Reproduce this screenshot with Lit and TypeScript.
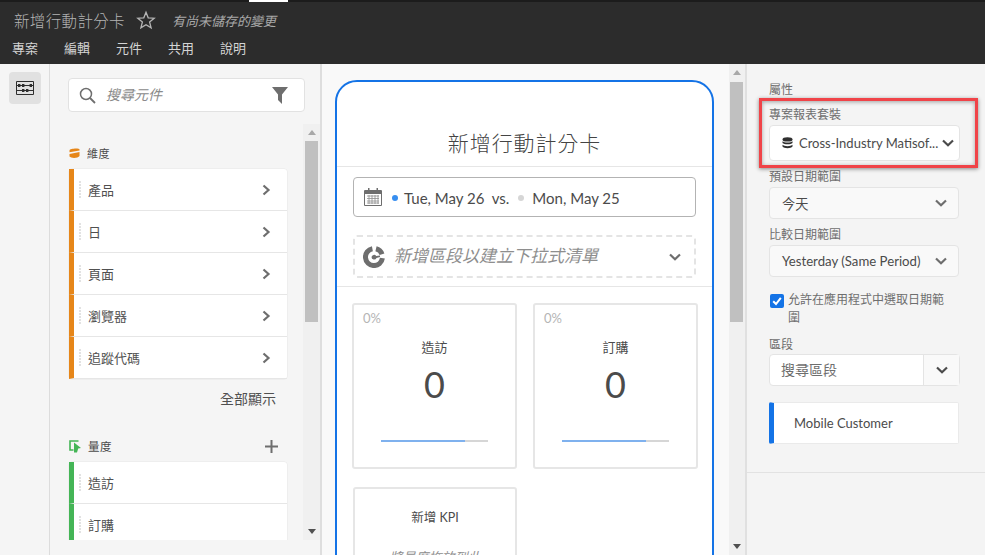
import { LitElement, html, css } from "lit";
import { customElement } from "lit/decorators.js";

const chevronRight = html`<svg class="chev-r" width="10" height="14" viewBox="0 0 10 14">
  <path d="M2.5 2.5 7.5 7 2.5 11.5" fill="none" stroke="#6e6e6e" stroke-width="2.2" />
</svg>`;

const chevronDown = html`<svg width="14" height="10" viewBox="0 0 14 10">
  <path d="M2 2.5 7 7.2 12 2.5" fill="none" stroke="#6e6e6e" stroke-width="2.2" />
</svg>`;

const darkChevron = html`<svg width="14" height="10" viewBox="0 0 14 10">
  <path d="M2 2.5 7 7.2 12 2.5" fill="none" stroke="#4b4b4b" stroke-width="2.2" />
</svg>`;

const dimensions = ["產品", "日", "頁面", "瀏覽器", "追蹤代碼"];
const metrics = ["造訪", "訂購"];

@customElement("app-root")
export class AppRoot extends LitElement {
  static styles = css`
    :host {
      display: block;
      width: 985px;
      height: 555px;
      overflow: hidden;
      position: relative;
      font-family: "Lato", "Noto Sans CJK TC", sans-serif;
      color: #4b4b4b;
      background: #f5f5f5;
    }
    .top {
      height: 64px;
      background: #2c2c2c;
      color: #cfcfcf;
      border-top: 2px solid #1c1c1c;
      box-sizing: border-box;
      position: relative;
    }
    .tab-mark {
      position: absolute;
      left: 249px;
      top: -2px;
      width: 39px;
      height: 2px;
      background: #fff;
    }
    .title-row {
      display: flex;
      align-items: center;
      height: 36px;
      padding-left: 14px;
    }
    .title {
      font-size: 15.5px;
      font-weight: 300;
      color: #b4b4b4;
      letter-spacing: 0.35px;
    }
    .star {
      margin-left: 11px;
    }
    .unsaved {
      margin-left: 16px;
      font-size: 13px;
      font-style: italic;
      color: #a8a8a8;
    }
    .menu {
      display: flex;
      gap: 26px;
      padding-left: 12px;
      font-size: 13px;
      color: #d4d4d4;
      line-height: 20px;
    }
    .body {
      display: flex;
      height: 491px;
    }
    .rail {
      flex: none;
      border-right: 1px solid #dcdcdc;
      padding: 8px 0 0 9px;
      width: 40px;
    }
    .rail-btn {
      width: 32px;
      height: 32px;
      background: #e1e1e1;
      border-radius: 4px;
      display: flex;
      align-items: center;
      justify-content: center;
    }
    .panel {
      width: 270px;
      flex: none;
      display: flex;
      flex-direction: column;
      border-right: 2px solid #dedede;
    }
    .search {
      margin: 14px 15px 0 18px;
      height: 34px;
      box-sizing: border-box;
      background: #fff;
      border: 1px solid #e2e2e2;
      border-radius: 4px;
      display: flex;
      align-items: center;
      padding: 0 16px 0 10px;
    }
    .search span {
      margin-left: 10px;
      flex: 1;
      font-size: 14px;
      line-height: 18px;
      margin-top: -1px;
      font-style: italic;
      color: #8a8a8a;
    }
    .scroller {
      display: flex;
      height: 416px;
      margin-top: 12px;
    }
    .list {
      flex: 1;
      overflow: hidden;
      padding: 0 16px 0 19px;
      min-width: 0;
    }
    .section {
      display: flex;
      align-items: center;
      font-size: 11px;
      color: #4b4b4b;
      gap: 7px;
      letter-spacing: 0.4px;
    }
    .section.dim {
      margin-top: 21px;
      height: 16px;
    }
    .section.met {
      margin-top: 30px;
      height: 16px;
      font-size: 11.5px;
    }
    .section .plus {
      margin-left: auto;
      margin-right: 9px;
    }
    .cards {
      margin-top: 8px;
      border-radius: 3px;
      background: #fff;
      box-shadow: 0 0 0 0.5px #e8e8e8;
    }
    .row {
      height: 42px;
      box-sizing: border-box;
      display: flex;
      align-items: center;
      border-left: 5px solid #e68619;
      border-bottom: 1px solid #e6e6e6;
      font-size: 13px;
      color: #505050;
      padding-right: 16px;
    }
    .row.green {
      border-left-color: #44b556;
    }
    .grip {
      width: 2px;
      height: 18px;
      margin: 0 7px 0 5px;
      background: repeating-linear-gradient(#e2e2e2 0 2px, transparent 2px 3px);
    }
    .row .label {
      flex: 1;
    }
    .show-all {
      text-align: right;
      font-size: 14px;
      line-height: 18px;
      padding: 11px 11px 0 0;
      color: #505050;
    }
    .scrollbar {
      flex: none;
      width: 17px;
      background: #f0f0f0;
      display: flex;
      flex-direction: column;
      align-items: center;
    }
    .scrollbar.narrow {
      width: 14px;
      height: 100%;
      padding-left: 1px;
      box-sizing: border-box;
    }
    .arrow {
      height: 17px;
      display: flex;
      align-items: center;
      justify-content: center;
      flex: none;
    }
    .thumb {
      flex: none;
      width: 13px;
      background: #c0c0c0;
    }
    .gap {
      flex: 1;
    }
    .center {
      flex: none;
      width: 407px;
      background: #f9f9f9;
      padding: 16px 0 0 13px;
      box-sizing: border-box;
      overflow: hidden;
    }
    .phone {
      width: 379px;
      height: 520px;
      box-sizing: border-box;
      background: #fff;
      border: 2px solid #1473e6;
      border-radius: 22px;
    }
    .phone h1 {
      margin: 0;
      height: 85px;
      box-sizing: border-box;
      padding-top: 46px;
      font-size: 21px;
      font-weight: 300;
      line-height: 30px;
      text-align: center;
      letter-spacing: 0.9px;
      color: #444;
      border-bottom: 1px solid #e6e6e6;
    }
    .date {
      margin: 10px 16px 0 16px;
      height: 40px;
      box-sizing: border-box;
      border: 1px solid #b3b3b3;
      border-radius: 4px;
      display: flex;
      align-items: center;
      padding: 2px 0 0 10px;
      font-size: 15px;
      color: #4b4b4b;
    }
    .date .cal {
      margin: -2px 10px 0 0;
    }
    .dot {
      width: 6px;
      height: 6px;
      border-radius: 50%;
      margin: 0 6px 0 0;
    }
    .seg {
      margin: 18px 16px 0 16px;
      height: 43px;
      box-sizing: border-box;
      border: 2px dashed #e4e4e4;
      border-radius: 4px;
      display: flex;
      align-items: center;
      padding: 0 12px 0 8px;
      font-size: 17px;
      font-style: italic;
      color: #8e8e8e;
    }
    .seg span {
      flex: 1;
      margin-left: 9px;
      line-height: 22px;
      margin-top: -2px;
    }
    .divider {
      margin-top: 8px;
      border-top: 1px solid #e6e6e6;
    }
    .kpis {
      display: grid;
      grid-template-columns: 165px 165px;
      column-gap: 16px;
      row-gap: 18px;
      padding: 16px 0 0 15px;
    }
    .kpi {
      height: 166px;
      box-sizing: border-box;
      border: 2px solid #e6e6e6;
      border-radius: 3px;
      background: #fff;
      display: flex;
      flex-direction: column;
      align-items: center;
    }
    .pct {
      align-self: flex-start;
      font-size: 13px;
      line-height: 14px;
      color: #b5b5b5;
      margin: 6px 0 0 9px;
    }
    .kpi .name {
      margin-top: 13px;
      font-size: 13px;
      line-height: 18px;
      color: #4b4b4b;
    }
    .kpi .val {
      margin-top: 6px;
      font-size: 36px;
      line-height: 44px;
      color: #4b4b4b;
    }
    .bar {
      margin-top: 34px;
      width: 107px;
      height: 2px;
      background: #d6d6d6;
    }
    .bar i {
      display: block;
      height: 100%;
      background: #7fb1ee;
    }
    .kpi.add {
      margin-left: 1px;
    }
    .kpi.add .name {
      margin-top: 20px;
      font-size: 12.5px;
    }
    .hint {
      margin-top: 20px;
      font-size: 13px;
      font-style: italic;
      color: #8e8e8e;
    }
    .main-scroll {
      height: 491px;
      border-right: 2px solid #e0e0e0;
      width: 16px;
      flex: none;
      background: #f0f0f0;
    }
    .props {
      flex: 1;
      padding: 18px 26px 0 22px;
      min-width: 0;
      background: #f4f4f4;
    }
    .props .lbl {
      font-size: 12px;
      line-height: 16px;
      color: #6e6e6e;
    }
    .suite {
      margin-top: 9px;
    }
    .select {
      height: 32px;
      box-sizing: border-box;
      border: 1px solid #e4e4e4;
      border-radius: 4px;
      background: #f9f9f9;
      display: flex;
      align-items: center;
      padding: 0 10px 0 12px;
      font-size: 13.2px;
      color: #4b4b4b;
      margin-top: 2px;
    }
    .select.white {
      height: 36px;
      background: #fff;
      width: 191px;
      padding-right: 4px;
      font-size: 13px;
    }
    .select .txt {
      flex: 1;
      white-space: nowrap;
    }
    .select.white .txt {
      margin-left: 6px;
    }
    .field {
      margin-top: 8px;
    }
    .check {
      display: flex;
      gap: 4px;
      margin-top: 14px;
      width: 176px;
      font-size: 12px;
      line-height: 18px;
      color: #6e6e6e;
      margin-left: 1px;
    }
    .box {
      flex: none;
      width: 14px;
      height: 14px;
      background: #1473e6;
      border-radius: 2px;
      margin-top: 3px;
    }
    .check + .field {
      margin-top: 10px;
    }
    .combo {
      display: flex;
      width: 191px;
      height: 32px;
      box-sizing: border-box;
      border: 1px solid #e4e4e4;
      border-radius: 4px;
      background: #fff;
      margin-top: 1px;
      font-size: 14px;
      color: #6e6e6e;
      align-items: center;
    }
    .combo .txt {
      flex: 1;
      padding: 0 0 3px 11px;
    }
    .combo .btn {
      width: 36px;
      height: 100%;
      border-left: 1px solid #e4e4e4;
      background: #f9f9f9;
      display: flex;
      align-items: center;
      justify-content: center;
      box-sizing: border-box;
    }
    .mobile {
      margin-top: 16px;
      width: 190px;
      height: 42px;
      box-sizing: border-box;
      background: #fff;
      border: 1px solid #eaeaea;
      border-left: 5px solid #1473e6;
      border-radius: 2px;
      display: flex;
      align-items: center;
      padding-left: 20px;
      font-size: 13px;
      color: #4b4b4b;
    }
    .rule {
      margin: 28px -26px 0 -22px;
      border-top: 1px solid #e2e2e2;
    }
    .callout {
      position: absolute;
      left: 759px;
      top: 98px;
      width: 219px;
      height: 70px;
      box-sizing: border-box;
      border: 3px solid #f04348;
      box-shadow: 0 1px 4px rgba(0, 0, 0, 0.45), inset 0 1px 4px rgba(0, 0, 0, 0.35);
      pointer-events: none;
    }
  `;

  private upArrow() {
    return html`<div class="arrow">
      <svg width="8" height="5" viewBox="0 0 8 5"><path d="M0 5 4 0 8 5Z" fill="#a8a8a8" /></svg>
    </div>`;
  }

  private downArrow() {
    return html`<div class="arrow">
      <svg width="8" height="5" viewBox="0 0 8 5"><path d="M0 0 4 5 8 0Z" fill="#505050" /></svg>
    </div>`;
  }

  private row(label: string, green: boolean) {
    return html`<div class="row ${green ? "green" : ""}">
      <div class="grip"></div>
      <div class="label">${label}</div>
      ${green ? "" : chevronRight}
    </div>`;
  }

  private kpi(name: string) {
    return html`<div class="kpi">
      <div class="pct">0%</div>
      <div class="name">${name}</div>
      <div class="val">0</div>
      <div class="bar"><i style="width: 78.5%"></i></div>
    </div>`;
  }

  render() {
    return html`
      <div class="top">
        <div class="tab-mark"></div>
        <div class="title-row">
          <div class="title">新增行動計分卡</div>
          <svg class="star" width="20" height="20" viewBox="0 0 20 20">
            <path d="M10 2.2 12.2 7.8 18.2 8.2 13.6 12 15.1 17.9 10 14.7 4.9 17.9 6.4 12 1.8 8.2 7.8 7.8Z" fill="none" stroke="#b5b5b5" stroke-width="1.3" />
          </svg>
          <div class="unsaved">有尚未儲存的變更</div>
        </div>
        <div class="menu">
          <span>專案</span><span>編輯</span><span>元件</span><span>共用</span><span>說明</span>
        </div>
      </div>
      <div class="body">
        <div class="rail">
          <div class="rail-btn">
            <svg width="18" height="14" viewBox="0 0 18 14">
              <path d="M.5.5h17v13H.5z" fill="none" stroke="#2f2f2f" />
              <path d="M1 4.5h16M1 9.5h16" stroke="#2f2f2f" />
              <path d="M2 3h2.4v3H2zM6 3h2.4v3H6zM13.6 3H16v3h-2.4zM6 8h2.4v3H6zM10 8h2.4v3H10z" fill="#2f2f2f" />
            </svg>
          </div>
        </div>
        <div class="panel">
          <div class="search">
            <svg width="17" height="17" viewBox="0 0 17 17">
              <circle cx="7" cy="7" r="5.5" fill="none" stroke="#6e6e6e" stroke-width="1.5" />
              <path d="M11 11 16 16" stroke="#6e6e6e" stroke-width="1.8" />
            </svg>
            <span>搜尋元件</span>
            <svg width="16" height="17" viewBox="0 0 16 17">
              <path d="M0 0H16L10 7.5V17L6 13V7.5Z" fill="#6e6e6e" />
            </svg>
          </div>
          <div class="scroller">
            <div class="list">
              <div class="section dim">
                <svg width="11" height="10" viewBox="0 0 11 10">
                  <path d="M.5 2.2C.5.4 10.5-.4 10.5 1.5V2.4L.5 4.2Z" fill="#e68619" />
                  <path d="M.5 6 10.5 4V8C9 10.4 2 10.4 .5 8.6Z" fill="#e68619" />
                </svg>
                維度
              </div>
              <div class="cards">${dimensions.map((d) => this.row(d, false))}</div>
              <div class="show-all">全部顯示</div>
              <div class="section met">
                <svg width="13" height="13" viewBox="0 0 13 13" style="margin-right: -1px">
                  <path d="M9.5 1H1V10H4.5" fill="none" stroke="#44b556" stroke-width="1.6" />
                  <path d="M5 2.5 12 8 9.2 8.5 8 12.5 5 12.5Z" fill="#44b556" />
                </svg>
                量度
                <svg class="plus" width="13" height="13" viewBox="0 0 13 13">
                  <path d="M6.5 0V13M0 6.5H13" stroke="#6e6e6e" stroke-width="2" />
                </svg>
              </div>
              <div class="cards">${metrics.map((m) => this.row(m, true))}</div>
            </div>
            <div class="scrollbar">
              ${this.upArrow()}
              <div class="thumb" style="height: 181px"></div>
              <div class="gap"></div>
              ${this.downArrow()}
            </div>
          </div>
        </div>
        <div class="center">
          <div class="phone">
            <h1>新增行動計分卡</h1>
            <div class="date">
              <svg class="cal" width="18" height="18" viewBox="0 0 18 18">
                <path d="M.5 2.5h17v15H.5z" fill="none" stroke="#6e6e6e" />
                <path d="M0 3h18v3H0zM4 0h1.5v3H4zM12.5 0H14v3h-1.5z" fill="#6e6e6e" />
                <path d="M3 8h12M3 10.5h12M3 13h12M3 15h12M5 7v9M8 7v9M11 7v9M14 7v9" stroke="#8e8e8e" stroke-width=".8" />
              </svg>
              <div class="dot" style="background: #378ef0"></div>
              <span>Tue, May 26&nbsp; vs.</span>
              <div class="dot" style="background: #d6d6d6; margin-left: 9px; margin-right: 8px"></div>
              <span>Mon, May 25</span>
            </div>
            <div class="seg">
              <svg width="22" height="22" viewBox="0 0 22 22">
                <path d="M9.4 2.7A8.5 8.5 0 1 0 19.4 12.2" fill="none" stroke="#6e6e6e" stroke-width="5" />
                <path d="M13 2.7A8.5 8.5 0 0 1 19 8.2" fill="none" stroke="#6e6e6e" stroke-width="5" />
                <path d="M8.5 11a2.6 2.6 0 0 0 5 1L17 11V9.6L13.2 10A2.6 2.6 0 0 0 8.5 11Z" fill="#6e6e6e" />
              </svg>
              <span>新增區段以建立下拉式清單</span>
              ${chevronDown}
            </div>
            <div class="divider"></div>
            <div class="kpis">
              ${this.kpi("造訪")} ${this.kpi("訂購")}
              <div class="kpi add">
                <div class="name">新增 KPI</div>
                <div class="hint">將量度拖放到此</div>
              </div>
            </div>
          </div>
        </div>
        <div class="main-scroll">
          <div class="scrollbar narrow">
            ${this.upArrow()}
            <div class="thumb" style="height: 240px; margin-top: 1px"></div>
            <div class="gap"></div>
            ${this.downArrow()}
          </div>
        </div>
        <div class="props">
          <div class="lbl">屬性</div>
          <div class="suite">
            <div class="lbl">專案報表套裝</div>
            <div class="select white">
              <svg width="11" height="12" viewBox="0 0 11 12">
                <ellipse cx="5.5" cy="2.4" rx="5" ry="2.2" fill="#2f2f2f" />
                <path d="M.5 4.2C2 6 9 6 10.5 4.2V6C9 7.8 2 7.8 .5 6Z" fill="#2f2f2f" />
                <path d="M.5 7.8C2 9.6 9 9.6 10.5 7.8V9.6C9 11.8 2 11.8 .5 9.6Z" fill="#2f2f2f" />
              </svg>
              <span class="txt">Cross-Industry Matisof...</span>
              ${darkChevron}
            </div>
          </div>
          <div class="field">
            <div class="lbl">預設日期範圍</div>
            <div class="select"><span class="txt">今天</span>${chevronDown}</div>
          </div>
          <div class="field">
            <div class="lbl">比較日期範圍</div>
            <div class="select"><span class="txt">Yesterday (Same Period)</span>${chevronDown}</div>
          </div>
          <div class="check">
            <div class="box">
              <svg width="14" height="14" viewBox="0 0 14 14">
                <path d="M3.2 7.2 6 10 10.8 3.8" fill="none" stroke="#fff" stroke-width="2" />
              </svg>
            </div>
            <div>允許在應用程式中選取日期範圍</div>
          </div>
          <div class="field">
            <div class="lbl">區段</div>
            <div class="combo">
              <span class="txt">搜尋區段</span>
              <div class="btn">${darkChevron}</div>
            </div>
          </div>
          <div class="mobile">Mobile Customer</div>
          <div class="rule"></div>
        </div>
      </div>
      <div class="callout"></div>
    `;
  }
}
